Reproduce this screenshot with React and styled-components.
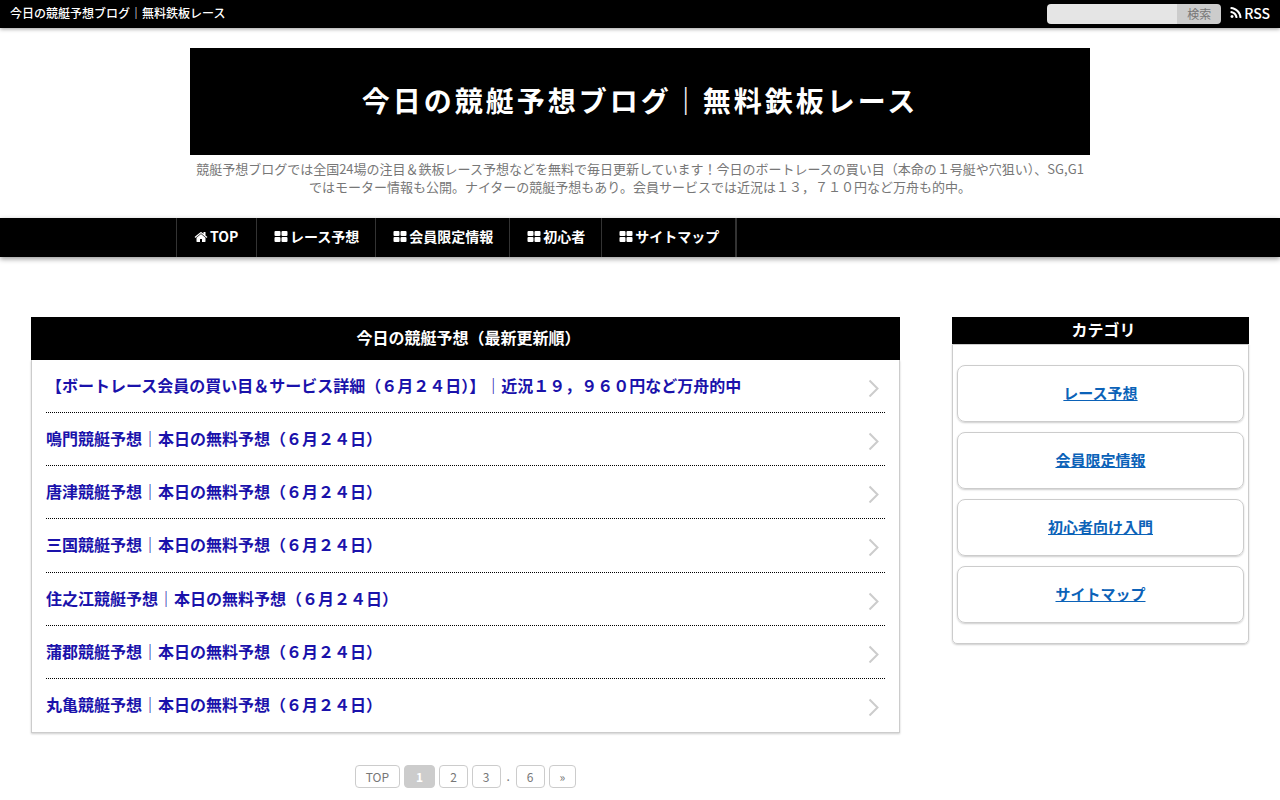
import React from "react";
import styled, { createGlobalStyle } from "styled-components";

const posts = [
  "【ボートレース会員の買い目＆サービス詳細（６月２４日）】｜近況１９，９６０円など万舟的中",
  "鳴門競艇予想｜本日の無料予想（６月２４日）",
  "唐津競艇予想｜本日の無料予想（６月２４日）",
  "三国競艇予想｜本日の無料予想（６月２４日）",
  "住之江競艇予想｜本日の無料予想（６月２４日）",
  "蒲郡競艇予想｜本日の無料予想（６月２４日）",
  "丸亀競艇予想｜本日の無料予想（６月２４日）",
];

const menu = ["レース予想", "会員限定情報", "初心者", "サイトマップ"];
const categories = ["レース予想", "会員限定情報", "初心者向け入門", "サイトマップ"];

function HomeIcon() {
  return (
    <Icon viewBox="0 0 1792 1792" aria-hidden="true">
      <path d="M1472 992v480q0 26-19 45t-45 19h-384v-384h-256v384h-384q-26 0-45-19t-19-45v-480q0-1 .5-3t.5-3l575-474 575 474q1 2 1 6zm223-69l-62 74q-8 9-21 11h-3q-13 0-21-7l-692-577-692 577q-12 8-24 7-13-2-21-11l-62-74q-8-10-7-23.5t11-21.5l719-599q32-26 76-26t76 26l244 204v-195q0-14 9-23t23-9h192q14 0 23 9t9 23v408l219 182q10 8 11 21.5t-7 23.5z" />
    </Icon>
  );
}

function GridIcon() {
  return (
    <Icon viewBox="0 0 1792 1792" aria-hidden="true">
      <rect x="64" y="128" width="768" height="640" rx="128" />
      <rect x="960" y="128" width="768" height="640" rx="128" />
      <rect x="64" y="896" width="768" height="640" rx="128" />
      <rect x="960" y="896" width="768" height="640" rx="128" />
    </Icon>
  );
}

function RssIcon() {
  return (
    <Icon viewBox="0 0 1792 1792" aria-hidden="true">
      <path d="M576 1344q0 80-56 136t-136 56-136-56-56-136 56-136 136-56 136 56 56 136zm512 123q2 28-17 48-18 21-47 21h-135q-25 0-43-16.5t-20-41.5q-22-229-184.5-391.5t-391.5-184.5q-25-2-41.5-20t-16.5-43v-135q0-29 21-47 17-17 43-17h5q160 13 306 80.5t259 181.5q114 113 181.5 259t80.5 306zm512 2q2 27-18 47-18 20-46 20h-143q-26 0-44.5-17.5t-19.5-42.5q-12-215-101-408.5t-231.5-336-336-231.5-408.5-102q-25-1-42.5-19.5t-17.5-43.5v-143q0-28 20-46 18-18 44-18h3q262 13 501.5 120t425.5 294q187 186 294 425.5t120 501.5z" />
    </Icon>
  );
}

function App() {
  return (
    <>
      <GlobalStyle />
      <TopBar>
        <SiteName>今日の競艇予想ブログ｜無料鉄板レース</SiteName>
        <TopTools>
          <SearchForm onSubmit={(e) => e.preventDefault()}>
            <SearchInput type="text" aria-label="検索" />
            <SearchButton type="submit">検索</SearchButton>
          </SearchForm>
          <RssLink href="#rss">
            <RssIcon />
            RSS
          </RssLink>
        </TopTools>
      </TopBar>

      <Header>
        <Title>今日の競艇予想ブログ｜無料鉄板レース</Title>
        <Description>
          競艇予想ブログでは全国24場の注目＆鉄板レース予想などを無料で毎日更新しています！今日のボートレースの買い目（本命の１号艇や穴狙い）、SG,G1ではモーター情報も公開。ナイターの競艇予想もあり。会員サービスでは近況は１３，７１０円など万舟も的中。
        </Description>
      </Header>

      <Nav>
        <NavList>
          <NavItem>
            <NavLink href="#top">
              <HomeIcon />
              TOP
            </NavLink>
          </NavItem>
          {menu.map((name) => (
            <NavItem key={name}>
              <NavLink href="#menu">
                <GridIcon />
                {name}
              </NavLink>
            </NavItem>
          ))}
        </NavList>
      </Nav>

      <Content>
        <Main>
          <ListTitle>今日の競艇予想（最新更新順）</ListTitle>
          <PostList>
            {posts.map((title) => (
              <Post key={title}>
                <PostLink href="#post">
                  {title}
                  <Chevron viewBox="0 0 12 24" aria-hidden="true">
                    <polyline points="1.5,7.5 9.5,15.5 1.5,23.5" />
                  </Chevron>
                </PostLink>
              </Post>
            ))}
          </PostList>
          <Pager>
            <PageLink href="#top">TOP</PageLink>
            <CurrentPage>1</CurrentPage>
            <PageLink href="#2">2</PageLink>
            <PageLink href="#3">3</PageLink>
            <Dots>.</Dots>
            <PageLink href="#6">6</PageLink>
            <PageLink href="#next">»</PageLink>
          </Pager>
        </Main>

        <Sidebar>
          <SideTitle>カテゴリ</SideTitle>
          <CategoryList>
            {categories.map((name) => (
              <Category key={name}>
                <CategoryLink href="#category">{name}</CategoryLink>
              </Category>
            ))}
          </CategoryList>
        </Sidebar>
      </Content>
    </>
  );
}

export default App;

const GlobalStyle = createGlobalStyle`
  * {
    box-sizing: border-box;
  }
  body {
    margin: 0;
    background: #fff;
    color: #777;
    font-family: "Noto Sans CJK JP", sans-serif;
    font-size: 14px;
  }
  h1, h2, p, ul {
    margin: 0;
    padding: 0;
  }
  ul {
    list-style: none;
  }
  a {
    text-decoration: none;
  }
  input, button {
    font-family: inherit;
    border: 0;
    padding: 0;
  }
`;

const Icon = styled.svg`
  width: 14px;
  height: 14px;
  flex: none;
  fill: currentColor;
`;

const TopBar = styled.div`
  display: flex;
  justify-content: space-between;
  align-items: center;
  height: 28px;
  padding: 0 10px;
  background: #000;
  color: #fff;
  box-shadow: 0 1px 4px rgba(0, 0, 0, 0.4);
`;

const SiteName = styled.p`
  font-size: 12px;
  font-weight: 500;
  line-height: 20px;
  padding-bottom: 2px;
`;

const TopTools = styled.div`
  display: flex;
  align-items: center;
  gap: 8px;
`;

const SearchForm = styled.form`
  display: flex;
  height: 20px;
  border-radius: 4px;
  overflow: hidden;
`;

const SearchInput = styled.input`
  width: 130px;
  background: #e5e5e5;
`;

const SearchButton = styled.button`
  width: 44px;
  background: #ccc;
  color: #777;
  font-size: 12px;
  line-height: 20px;
`;

const RssLink = styled.a`
  display: flex;
  align-items: center;
  gap: 1px;
  color: #fff;
  font-size: 14px;
  font-weight: 500;
  line-height: 20px;
  padding-bottom: 2px;
`;

const Header = styled.header`
  max-width: 900px;
  margin: 20px auto 22px;
  text-align: center;
`;

const Title = styled.h1`
  padding: 31px 0 34px;
  background: #000;
  color: #fff;
  font-size: 28px;
  line-height: 42px;
  letter-spacing: 3px;
`;

const Description = styled.p`
  margin-top: 5px;
  font-size: 13px;
  line-height: 18px;
`;

const Nav = styled.nav`
  background: #000;
  box-shadow: 0 2px 5px rgba(0, 0, 0, 0.4);
`;

const NavList = styled.ul`
  display: flex;
  max-width: 928px;
  margin: 0 auto;
`;

const NavItem = styled.li`
  min-width: 80px;
  border-left: 1px solid #333;
  &:last-child {
    border-right: 2px solid #333;
  }
`;

const NavLink = styled.a`
  display: flex;
  align-items: center;
  gap: 2px;
  padding: 0 16px 2px 17px;
  color: #fff;
  font-weight: bold;
  line-height: 37px;
`;

const Content = styled.div`
  display: flex;
  align-items: flex-start;
  gap: 52px;
  padding: 60px 31px 12px;
`;

const Main = styled.main`
  flex: 1;
`;

const Heading = styled.h2`
  background: #000;
  color: #fff;
  font-size: 16px;
  text-align: center;
`;

const ListTitle = styled(Heading)`
  && {
    padding: 0 0 2px 6px;
  }
  line-height: 41px;
`;

const PostList = styled.ul`
  display: grid;
  grid-auto-rows: 1fr;
  min-height: 373px;
  && {
    padding: 0 14px;
  }
  border: 1px solid #ccc;
  border-top: 0;
  box-shadow: 0 1px 2px rgba(0, 0, 0, 0.2);
`;

const Post = styled.li`
  display: flex;
  border-bottom: 1px dotted #000;
  &:last-child {
    border-bottom: 0;
  }
`;

const PostLink = styled.a`
  flex: 1;
  display: flex;
  justify-content: space-between;
  align-items: center;
  padding: 0 5px 2px 0;
  color: #1a12ab;
  font-size: 16px;
  font-weight: bold;
  line-height: 24px;
`;

const Chevron = styled.svg`
  width: 12px;
  height: 24px;
  flex: none;
  fill: none;
  stroke: #ccc;
  stroke-width: 2;
`;

const Pager = styled.div`
  display: flex;
  justify-content: center;
  gap: 4px;
  margin-top: 32px;
  font-size: 12px;
  line-height: 21px;
`;

const PageLink = styled.a`
  min-width: 27px;
  padding: 0 10px;
  border: 1px solid #ccc;
  border-radius: 4px;
  color: #777;
  text-align: center;
`;

const CurrentPage = styled.span`
  padding: 0 11px;
  border: 1px solid #ccc;
  border-radius: 4px;
  background: #ccc;
  color: #fff;
  font-weight: bold;
`;

const Dots = styled.span`
  padding: 0 2px;
`;

const Sidebar = styled.aside`
  flex: 0 0 297px;
`;

const SideTitle = styled(Heading)`
  && {
    padding: 0 0 2px 6px;
  }
  line-height: 25px;
`;

const CategoryList = styled.ul`
  display: flex;
  flex-direction: column;
  gap: 10px;
  && {
    padding: 20px 4px;
  }
  border: 1px solid #ccc;
  border-radius: 0 0 5px 5px;
  box-shadow: 0 1px 2px rgba(0, 0, 0, 0.2);
`;

const Category = styled.li`
  padding-bottom: 2px;
  border: 1px solid #ccc;
  border-radius: 8px;
  box-shadow: 0 1px 2px rgba(0, 0, 0, 0.2);
  text-align: center;
`;

const CategoryLink = styled.a`
  display: block;
  color: #0b62b8;
  font-size: 15px;
  font-weight: bold;
  line-height: 53px;
  text-decoration: underline;
`;
